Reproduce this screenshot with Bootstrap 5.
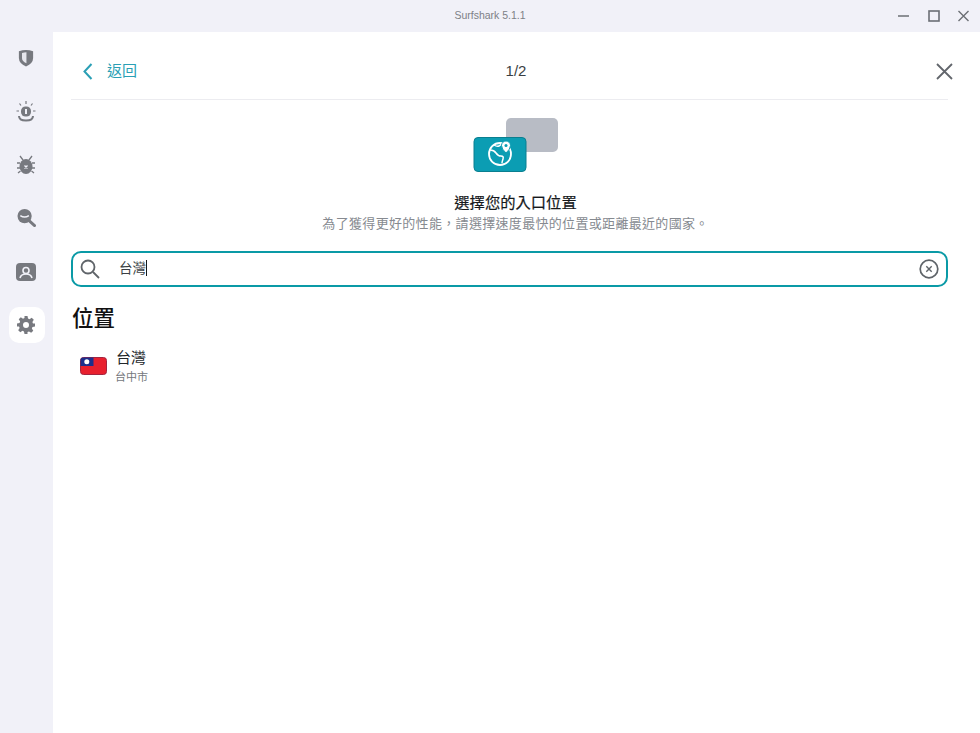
<!doctype html>
<html lang="zh-Hant"><head><meta charset="utf-8">
<link href="https://cdn.jsdelivr.net/npm/bootstrap@5.3.0/dist/css/bootstrap.min.css" rel="stylesheet">
<style>
html,body{height:100%;}
body{background:#f1f1f8;font-family:"Liberation Sans","Noto Sans CJK TC",sans-serif;overflow:hidden;color:#16191c;}
.app-frame{height:733px;width:980px;}
.title-bar{height:32px;flex:none;position:relative;}
.title-text{font-size:10.5px;color:#7d8086;}
.win-btns{position:absolute;right:11px;top:8px;gap:18px;}
.side-rail{width:53px;flex:none;padding-top:8px;gap:17.4px;}
.rail-item{width:36px;height:36px;border-radius:10px;}
.rail-item svg{margin-right:1px;}
.rail-active{background:#fff;}
.pane{background:#fff;padding:0 32px 0 18px;}
.top-row{height:68px;padding-top:12px;border-bottom:1px solid #ececf0;position:relative;}
.back-link{font-size:15px;color:#2a9fb5;padding-left:12px;gap:14px;}
.step-no{font-size:15px;color:#3a3f44;position:absolute;left:12px;right:0;top:29px;text-align:center;line-height:20px;padding-left:1px;}
.close-wrap{margin-right:-5px;}
.hero{padding:18px 0 0 12px;}
.hero-title{font-size:15.3px;font-weight:400;color:#16191c;line-height:20px;margin-top:19px;-webkit-text-stroke:.2px #16191c;}
.hero-sub{font-size:13px;color:#868a90;line-height:18px;margin-top:2px;letter-spacing:.32px;}
.search-box{height:36px;border:2px solid #0a9aa6;border-radius:10px;margin-top:18px;padding:0 7px 0 7px;}
.search-val{font-size:13.5px;color:#3a3f44;margin-left:19px;line-height:20px;}
.caret-bar{display:inline-block;width:1px;height:16px;background:#16191c;vertical-align:-3px;}
.sec-title{font-size:21.5px;font-weight:500;color:#111;margin:17px 0 0 1px;line-height:30px;}
.loc-row{margin:14px 0 0 9px;gap:9px;}
.loc-name{font-size:15px;line-height:20px;color:#22262a;}
.loc-city{font-size:11px;line-height:14px;color:#74777c;margin-top:2px;margin-left:-1px;}
</style></head>
<body>
<div class="app-frame d-flex flex-column">
  <div class="title-bar d-flex align-items-center justify-content-center">
    <span class="title-text">Surfshark 5.1.1</span>
    <div class="win-btns d-flex align-items-center">
      <svg width="12" height="16" viewBox="0 0 12 16"><path d="M0 8h11" stroke="#6b6f75" stroke-width="1.5"/></svg>
      <svg width="12" height="16" viewBox="0 0 12 16"><rect x="1" y="3" width="10" height="10" fill="none" stroke="#6b6f75" stroke-width="1.6"/></svg>
      <svg width="11" height="16" viewBox="0 0 11 16"><path d="M.5 3l10 10M10.500 3l-10 10" stroke="#6b6f75" stroke-width="1.4"/></svg>
    </div>
  </div>
  <div class="d-flex flex-grow-1">
    <nav class="side-rail d-flex flex-column align-items-center">
      <div class="rail-item d-flex align-items-center justify-content-center"><svg width="16" height="20" viewBox="0 0 18 20"><path d="M1 2.500Q9-.5 17 2.500V10Q17 16 9 19.500 1 16 1 10Z" fill="#77797f"/><path d="M4.500 4.500Q7 3.600 9.500 3.500V16Q4.500 14 4.500 10Z" fill="#e6e6ec"/></svg></div>
      <div class="rail-item d-flex align-items-center justify-content-center"><svg width="20" height="21" viewBox="0 0 20 21"><rect x="5" y="5.500" width="10" height="10" rx="4.500" fill="#77797f"/><path d="M9 8h2v5H9z" fill="#f1f1f8"/><path d="M3 15q0 4.500 7 4.500t7-4.500" fill="none" stroke="#77797f" stroke-width="2"/><path d="M10 0v3M3.500 2.500 5 4.500M16.500 2.500 15 4.500M0.500 10h2.500M17 10h2.500" stroke="#77797f" stroke-width="1.200"/></svg></div>
      <div class="rail-item d-flex align-items-center justify-content-center"><svg width="18" height="20" viewBox="0 0 18 20"><ellipse cx="9" cy="11.500" rx="6.500" ry="7.500" fill="#77797f"/><path d="M3 1l3 4M15 1l-3 4M0 8h3M18 8h-3M0 13h3M18 13h-3M1 18l2.500-2M17 18l-2.500-2" stroke="#77797f" stroke-width="1.300"/><path d="M7.500 10.500l3 3M10.500 10.500l-3 3" stroke="#f1f1f8" stroke-width="1.400"/></svg></div>
      <div class="rail-item d-flex align-items-center justify-content-center"><svg width="19" height="20" viewBox="0 0 20 20"><circle cx="8" cy="8" r="7.500" fill="#77797f"/><path d="M3.500 7.500q4.500 3 9 0" fill="none" stroke="#f1f1f8" stroke-width="1.600"/><path d="M13 13l5.500 5" stroke="#77797f" stroke-width="3" stroke-linecap="round"/></svg></div>
      <div class="rail-item d-flex align-items-center justify-content-center"><svg width="20" height="18" viewBox="0 0 20 18"><rect width="20" height="18" rx="4" fill="#77797f"/><circle cx="10" cy="7.500" r="3" fill="none" stroke="#f1f1f8" stroke-width="1.600"/><path d="M4 15q1-4 6-4t6 4" fill="none" stroke="#f1f1f8" stroke-width="1.600"/></svg></div>
      <div class="rail-item rail-active d-flex align-items-center justify-content-center"><svg width="18" height="18" viewBox="0 0 24 24"><path fill="#77797f" fill-rule="evenodd" d="M10 0h4l.7 3.400 2 .8 2.900-1.900 2.800 2.800-1.900 2.900.8 2L24 10v4l-3.400.7-.8 2 1.900 2.900-2.800 2.800-2.900-1.900-2 .8L14 24h-4l-.7-3.400-2-.8-2.900 1.900-2.800-2.800 1.900-2.900-.8-2L0 14v-4l3.400-.7.8-2-1.900-2.900 2.800-2.800 2.900 1.900 2-.8ZM12 8a4 4 0 1 0 0 8 4 4 0 0 0 0-8Z"/></svg></div>
    </nav>
    <main class="pane flex-grow-1">
      <div class="top-row d-flex align-items-center justify-content-between">
        <div class="back-link d-flex align-items-center"><svg width="10" height="17" viewBox="0 0 10 17"><path d="M8.500 1 1.500 8.500 8.500 16" fill="none" stroke="#2a9fb5" stroke-width="2"/></svg><span>返回</span></div>
        <div class="step-no">1/2</div>
        <svg class="close-wrap" width="17" height="17" viewBox="0 0 17 17"><path d="M1 1l15 15M16 1 1 16" stroke="#62666c" stroke-width="1.800"/></svg>
      </div>
      <div class="hero text-center">
        <svg width="86" height="56" viewBox="0 0 86 56"><rect x="33" y="0" width="52" height="34" rx="5" fill="#b8bcc5"/><rect x="1" y="19.500" width="52" height="34" rx="4" fill="#0b9db3" stroke="#0a7f90"/><circle cx="27" cy="36" r="11" fill="none" stroke="#fff" stroke-width="1.800"/><path d="M17 32q4 0 6 3t5 3 2 3-1 4M21 27q3 2 5 1t3-3" fill="none" stroke="#fff" stroke-width="1.500"/><path d="M33 35q-4.500-4-4.500-7.500a4.500 4.500 0 0 1 9 0q0 3.500-4.500 7.500Z" fill="#fff" stroke="#0b9db3"/><circle cx="33" cy="27.500" r="1.500" fill="#0b9db3"/></svg>
        <div class="hero-title">選擇您的入口位置</div>
        <div class="hero-sub">為了獲得更好的性能，請選擇速度最快的位置或距離最近的國家。</div>
      </div>
      <div class="search-box d-flex align-items-center">
        <svg width="20" height="20" viewBox="0 0 20 20"><circle cx="8" cy="8" r="6.500" fill="none" stroke="#5f6469" stroke-width="1.800"/><path d="M13 13l6 6" stroke="#5f6469" stroke-width="1.800"/></svg>
        <span class="search-val flex-grow-1">台灣<span class="caret-bar"></span></span>
        <svg width="20" height="20" viewBox="0 0 20 20"><circle cx="10" cy="10" r="8.800" fill="none" stroke="#5f6469" stroke-width="1.700"/><path d="M7.300 7.300l5.400 5.400M12.700 7.300l-5.400 5.400" stroke="#5f6469" stroke-width="1.400"/></svg>
      </div>
      <div class="sec-title">位置</div>
      <div class="loc-row d-flex align-items-center">
        <svg width="27" height="18" viewBox="0 0 27 18"><rect x=".5" y=".5" width="26" height="17" rx="3" fill="#e8202e" stroke="#a3243f"/><path d="M3 .5h10.500V9H.5V3A2.500 2.500 0 0 1 3 .5Z" fill="#1d2f8c"/><circle cx="6.800" cy="4.700" r="2.500" fill="#fff"/></svg>
        <div><div class="loc-name">台灣</div><div class="loc-city">台中市</div></div>
      </div>
    </main>
  </div>
</div>
<script src="https://cdn.jsdelivr.net/npm/bootstrap@5.3.0/dist/js/bootstrap.bundle.min.js"></script>
</body></html>
